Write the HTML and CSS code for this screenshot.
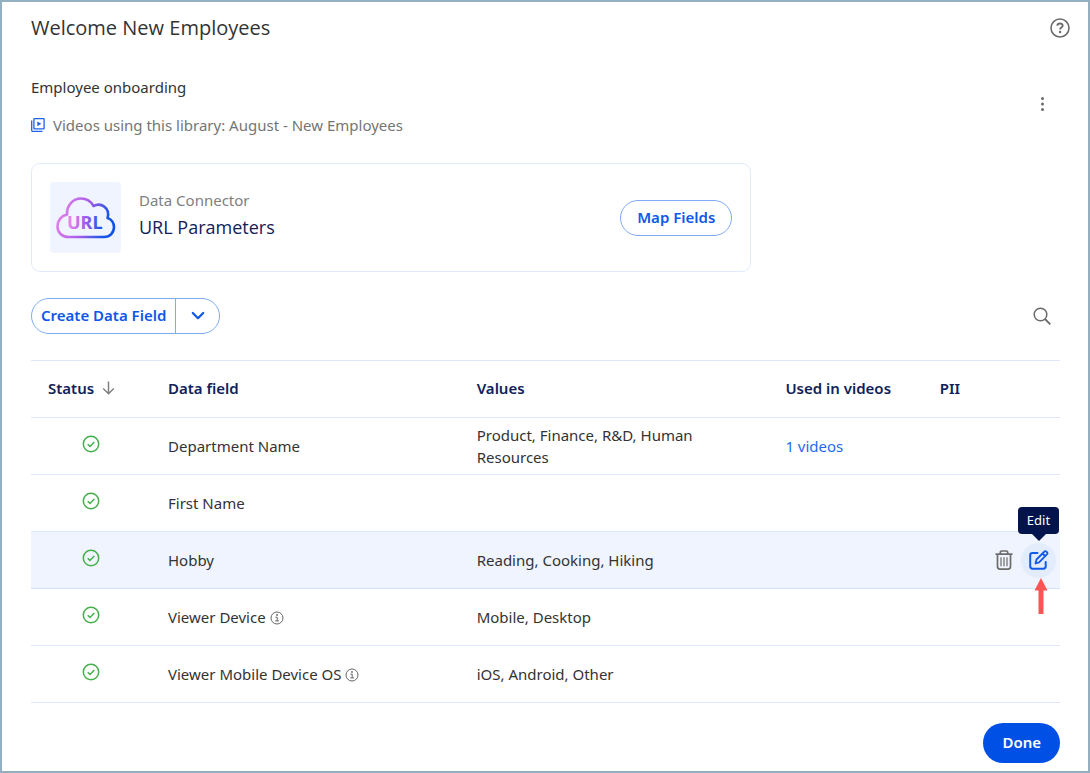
FILE: index.html
```html
<!DOCTYPE html>
<html lang="en">
<head>
<meta charset="utf-8">
<meta name="viewport" content="width=device-width, initial-scale=1">
<title>Welcome New Employees</title>
<link rel="stylesheet" href="styles.css">
</head>
<body>
<svg class="defs" aria-hidden="true">
  <defs>
    <symbol id="check" viewBox="0 0 18 18"><circle cx="9" cy="9" r="7.7" fill="none" stroke="currentColor" stroke-width="1.5"/><path d="M5.7 9.3 8 11.4 12.3 6.9" fill="none" stroke="currentColor" stroke-width="1.5"/></symbol>
    <symbol id="info" viewBox="0 0 14 14"><circle cx="7" cy="7" r="6" fill="none" stroke="currentColor"/><path d="M5.4 6.2h1.8v3.6M5.2 9.9h3.8" fill="none" stroke="currentColor"/><circle cx="7" cy="4" r=".9" fill="currentColor"/></symbol>
  </defs>
</svg>
<div class="page">
  <header class="header">
    <h1 class="title">Welcome New Employees</h1>
    <button class="icon-btn" type="button" aria-label="Help">
      <svg width="20" height="20" viewBox="0 0 20 20" fill="none" stroke="currentColor" stroke-width="1.6"><circle cx="10" cy="10" r="9"/><path d="M7.3 7.8C7.4 4.7 12.7 4.8 12.7 7.7c0 1.9-2.6 1.8-2.6 3.8" stroke-width="1.8"/><circle cx="10.1" cy="14" r="1.2" fill="currentColor" stroke="none"/></svg>
    </button>
  </header>

  <main class="content">
    <section class="intro">
      <div class="intro-text">
        <p class="description">Employee onboarding</p>
        <p class="usage">
          <svg width="14" height="14" viewBox="0 0 14 14" fill="none" stroke="currentColor" stroke-width="1.3"><rect x="2.9" y=".7" width="10.2" height="10.2" rx=".6"/><path d="M.7 2.5v10.1q0 .7.7.7h10.1"/><path d="M6.3 3.4v4.8l4-2.4z" fill="currentColor" stroke="none"/></svg>
          <span>Videos using this library: August - New Employees</span>
        </p>
      </div>
      <button class="icon-btn more" type="button" aria-label="More options">
        <svg width="18" height="18" viewBox="0 0 18 18" fill="currentColor"><circle cx="9.500" cy="3.5" r="1.5"/><circle cx="9.500" cy="9" r="1.5"/><circle cx="9.500" cy="14.5" r="1.5"/></svg>
      </button>
    </section>

    <section class="connector">
      <div class="logo">
        <svg width="60" height="42" viewBox="0 0 60 42" role="img" aria-label="URL">
          <defs><linearGradient id="cloud" gradientUnits="userSpaceOnUse" x1="0" y1="10" x2="60" y2="28"><stop offset="0" stop-color="#ee86ee"/><stop offset=".5" stop-color="#a45be8"/><stop offset=".85" stop-color="#1556e8"/><stop offset="1" stop-color="#0d50e8"/></linearGradient>
          <linearGradient id="word" gradientUnits="userSpaceOnUse" x1="12" y1="0" x2="46" y2="0"><stop offset="0" stop-color="#ee86ee"/><stop offset=".5" stop-color="#a45be8"/><stop offset="1" stop-color="#1556e8"/></linearGradient></defs>
          <path d="M12.5 40C6 40 1.500 35.500 1.500 29.500C1.500 23.500 5.500 18.500 11 17.500C10.500 8.500 17 1.500 25 1.500C30.500 1.500 35 4.500 37.500 9C45 5 54.500 11 51.500 21C55.500 22 58 26 58 30C58 35.500 54 40 48 40Z" fill="none" stroke="url(#cloud)" stroke-width="2.6" stroke-linejoin="round"/>
          <text class="logo-word" x="11" y="32" fill="url(#word)">URL</text>
        </svg>
      </div>
      <div class="connector-text">
        <p class="connector-label">Data Connector</p>
        <h2 class="connector-name">URL Parameters</h2>
      </div>
      <button class="btn outline" type="button">Map Fields</button>
    </section>

    <div class="toolbar">
      <div class="split">
        <button class="split-main" type="button">Create Data Field</button>
        <button class="split-toggle" type="button" aria-label="More create options">
          <svg width="14" height="10" viewBox="0 0 14 10" fill="none" stroke="currentColor" stroke-width="2.2" stroke-linecap="round" stroke-linejoin="round"><path d="M1.8 2 7 7.3 12.2 2"/></svg>
        </button>
      </div>
      <button class="icon-btn" type="button" aria-label="Search">
        <svg width="18" height="18" viewBox="0 0 18 18" fill="none" stroke="currentColor" stroke-width="1.5"><circle cx="7.5" cy="7.5" r="6.3"/><path d="M12 12l5.3 5.3" stroke-width="1.8"/></svg>
      </button>
    </div>

    <table class="fields">
      <colgroup><col class="col-status"><col class="col-wide"><col class="col-wide"><col class="col-used"><col></colgroup>
      <thead>
        <tr>
          <th scope="col"><span class="sort">Status <svg width="13" height="14" viewBox="0 0 13 14" fill="none" stroke="currentColor" stroke-width="1.5"><path d="M6.5 .5v12M1.2 7.5l5.3 5.3 5.3-5.3"/></svg></span></th>
          <th scope="col">Data field</th><th scope="col">Values</th><th scope="col">Used in videos</th><th scope="col">PII</th>
        </tr>
      </thead>
      <tbody>
        <tr>
          <td class="status"><svg class="check" role="img" aria-label="Ready"><use href="#check"/></svg></td>
          <td>Department Name</td><td>Product, Finance, R&amp;D, Human Resources</td><td><a class="link" href="#videos">1 videos</a></td><td></td>
        </tr>
        <tr>
          <td class="status"><svg class="check" role="img" aria-label="Ready"><use href="#check"/></svg></td>
          <td>First Name</td><td></td><td></td><td></td>
        </tr>
        <tr class="active">
          <td class="status"><svg class="check" role="img" aria-label="Ready"><use href="#check"/></svg></td>
          <td>Hobby</td><td>Reading, Cooking, Hiking</td><td></td>
          <td class="actions-cell">
            <div class="actions">
              <button class="icon-btn" type="button" aria-label="Delete">
                <svg width="18" height="20" viewBox="0 0 18 20" fill="none" stroke="currentColor" stroke-width="1.7"><path d="M.5 4.2h17M5.3 4V2.300q0-1.300 1.300-1.300h4.800q1.300 0 1.300 1.300V4M2.500 4.500v12q0 2.600 2.600 2.600h7.800q2.600 0 2.600-2.600V4.500"/><path d="M6 7.300v8.900M9 7.300v8.900M12 7.300v8.900" stroke-width="1.2"/></svg>
              </button>
              <div class="edit-wrap">
                <button class="edit" type="button" aria-label="Edit">
                  <svg width="20" height="20" viewBox="0 0 20 20" fill="none" stroke="currentColor" stroke-width="2" stroke-linejoin="round" stroke-linecap="round"><path d="M8.500 3H3.500Q1.200 3 1.200 5.300v11q0 2.400 2.400 2.400h10.700q2.400 0 2.400-2.400V12"/><path d="M6.500 13.500l1-4 8-8q1-.8 2.200.3 1.300 1.200.4 2.300l-8 8.200zM13.600 3.600l2.500 2.400" stroke-width="1.8"/></svg>
                </button>
                <span class="tooltip" role="tooltip">Edit</span>
                <svg class="pointer" width="14" height="36" viewBox="0 0 14 36" fill="#fb5454" aria-hidden="true"><path d="M7 0l6.500 12.500H9.500V36h-5V12.500H.5z"/></svg>
              </div>
            </div>
          </td>
        </tr>
        <tr>
          <td class="status"><svg class="check" role="img" aria-label="Ready"><use href="#check"/></svg></td>
          <td>Viewer Device <svg class="info" role="img" aria-label="Info"><use href="#info"/></svg></td><td>Mobile, Desktop</td><td></td><td></td>
        </tr>
        <tr>
          <td class="status"><svg class="check" role="img" aria-label="Ready"><use href="#check"/></svg></td>
          <td>Viewer Mobile Device OS <svg class="info" role="img" aria-label="Info"><use href="#info"/></svg></td><td>iOS, Android, Other</td><td></td><td></td>
        </tr>
      </tbody>
    </table>
  </main>

  <footer class="footer">
    <button class="btn primary" type="button">Done</button>
  </footer>
</div>
</body>
</html>
```
FILE: styles.css
```css
* { box-sizing: border-box; }

body {
  margin: 0;
  background: #fff;
  color: #333;
  font-family: "Noto Sans", "Open Sans", sans-serif;
  font-size: 15px;
  line-height: 22px;
}

h1, h2, p { margin: 0; }

button {
  padding: 0;
  border: 0;
  background: none;
  font: inherit;
  cursor: pointer;
}

svg { display: block; flex: none; }

.defs { position: absolute; width: 0; height: 0; }

.page {
  min-height: 100vh;
  padding: 12px 28px 8px 29px;
  border: 2px solid #94afc0;
}

.header {
  display: flex;
  justify-content: space-between;
  align-items: center;
  margin-right: -10px;
}

.title {
  font-family: "Open Sans", "Noto Sans", sans-serif;
  font-size: 20px;
  font-weight: 400;
  line-height: 28px;
}

.icon-btn {
  display: grid;
  place-items: center;
  min-width: 20px;
  color: #6b6b6b;
}

.intro {
  display: flex;
  justify-content: space-between;
  align-items: center;
  margin-top: 34px;
  padding-right: 8px;
}

.more { padding-bottom: 4px; }

.description { margin-bottom: 16px; }

.usage {
  display: flex;
  align-items: center;
  gap: 8px;
  color: #757575;
}

.usage svg { color: #1d62ea; }

.connector {
  display: flex;
  align-items: center;
  gap: 18px;
  width: 70%;
  min-width: 480px;
  margin-top: 27px;
  padding: 18px;
  border: 1px solid #e3eafc;
  border-radius: 9px;
}

.logo {
  display: grid;
  place-items: center;
  width: 71px;
  height: 71px;
  border-radius: 4px;
  background: #f0f4fe;
}

.logo-word {
  font-size: 18px;
  font-weight: 700;
}

.connector-text {
  flex: 1;
  padding-bottom: 8px;
}

.connector-label { color: #808080; }

.connector-name {
  margin-top: 4px;
  color: #0f2259;
  font-family: "Open Sans", "Noto Sans", sans-serif;
  font-size: 18px;
  font-weight: 400;
  line-height: 24px;
}

.btn {
  border-radius: 20px;
  font-weight: 600;
}

.outline {
  height: 36px;
  padding: 0 16px 2px;
  border: 1px solid #80aaf5;
  color: #0f57ea;
}

.toolbar {
  display: flex;
  justify-content: space-between;
  align-items: center;
  margin-top: 26px;
  padding-right: 8px;
}

.split {
  display: flex;
  height: 36px;
  border: 1px solid #80aaf5;
  border-radius: 18px;
  color: #0f57ea;
}

.split button { color: inherit; }

.split-main {
  padding: 0 9px 2px;
  font-weight: 600;
}

.split-toggle {
  display: grid;
  place-items: center;
  width: 44px;
  border-left: 1px solid #80aaf5;
}

.fields {
  width: 100%;
  margin-top: 26px;
  border-top: 1px solid #dfe8fb;
  border-spacing: 0;
  table-layout: fixed;
}

.col-status { width: 120px; }
.col-wide { width: 30%; }
.col-used { width: 15%; }

.fields th,
.fields td {
  height: 57px;
  padding: 0 17px;
  border-bottom: 1px solid #dfe8fb;
  text-align: left;
  vertical-align: middle;
}

.fields th {
  padding-bottom: 3px;
  color: #0f2259;
  font-weight: 600;
}

.sort {
  display: flex;
  align-items: center;
  gap: 8px;
}

.sort svg { color: #808080; }

.fields .status { padding-bottom: 5px; }

.check {
  width: 18px;
  height: 18px;
  margin: 0 auto;
  color: #43b04a;
}

.info {
  display: inline-block;
  width: 14px;
  height: 14px;
  vertical-align: -2px;
  color: #666;
}

.link {
  color: #1f69f0;
  text-decoration: none;
}

.active { background: #f0f4fe; }

.fields .active td { border-bottom-color: #d3e1fb; }

.fields .actions-cell { padding-right: 4px; }

.actions {
  display: flex;
  justify-content: flex-end;
  align-items: center;
  gap: 7px;
}

.edit-wrap { position: relative; }

.edit {
  display: grid;
  place-items: center;
  width: 35px;
  height: 35px;
  border-radius: 50%;
  background: #e3ecfa;
  color: #1259e8;
}

.tooltip {
  position: absolute;
  bottom: 44px;
  left: -3px;
  width: 41px;
  border-radius: 4px;
  background: #03144d;
  color: #fff;
  font-size: 13px;
  line-height: 27px;
  text-align: center;
}

.tooltip::after {
  content: "";
  position: absolute;
  top: 100%;
  left: 50%;
  margin-left: -7px;
  border: 7px solid transparent;
  border-top-color: #03144d;
  border-bottom: 0;
}

.pointer {
  position: absolute;
  top: 35px;
  left: 13px;
}

.footer {
  display: flex;
  justify-content: flex-end;
  margin-top: 20px;
}

.primary {
  height: 40px;
  padding: 0 19px 2px;
  background: #0050e6;
  color: #fff;
}
```
